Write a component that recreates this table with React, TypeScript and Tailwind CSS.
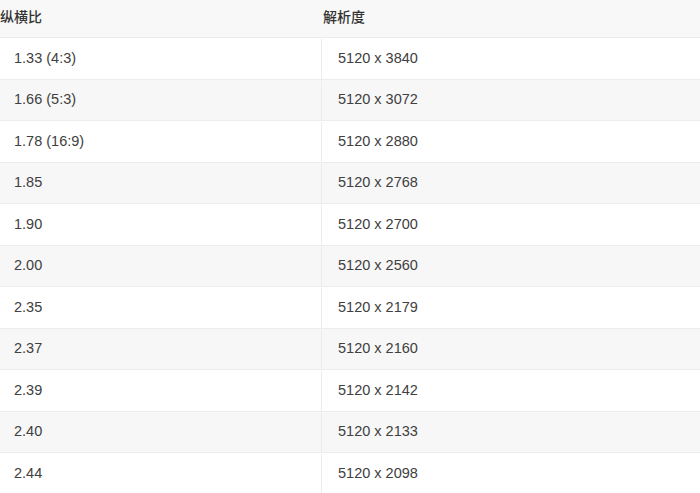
const rows: [string, string][] = [
  ["1.33 (4:3)", "5120 x 3840"],
  ["1.66 (5:3)", "5120 x 3072"],
  ["1.78 (16:9)", "5120 x 2880"],
  ["1.85", "5120 x 2768"],
  ["1.90", "5120 x 2700"],
  ["2.00", "5120 x 2560"],
  ["2.35", "5120 x 2179"],
  ["2.37", "5120 x 2160"],
  ["2.39", "5120 x 2142"],
  ["2.40", "5120 x 2133"],
  ["2.44", "5120 x 2098"],
];

export default function App() {
  return (
    <div className="h-[493px] w-[700px] overflow-hidden bg-white font-['Liberation_Sans','Noto_Sans_CJK_SC',sans-serif] text-[#404040]">
      <div className="grid h-[38px] grid-cols-[322px_1fr] items-center border-b border-[#ececec] bg-[#f8f8f8] pb-[2px] text-[14px] font-medium text-[#333]">
        <div>纵横比</div>
        <div className="pl-px">解析度</div>
      </div>
      {rows.map(([ratio, res], i) => (
        <div
          key={ratio}
          className={
            i % 2 === 1
              ? "grid h-[41.5px] grid-cols-[322px_1fr] border-b border-[#ececec] bg-[#f7f7f7] pt-px text-[14.5px]"
              : "grid h-[41.5px] grid-cols-[322px_1fr] border-b border-[#ececec] bg-white pt-px text-[14.5px]"
          }
        >
          <div className="flex items-center border-r border-[#ececec] pl-[14px]">{ratio}</div>
          <div className="flex items-center pl-[16px]">{res}</div>
        </div>
      ))}
    </div>
  );
}
